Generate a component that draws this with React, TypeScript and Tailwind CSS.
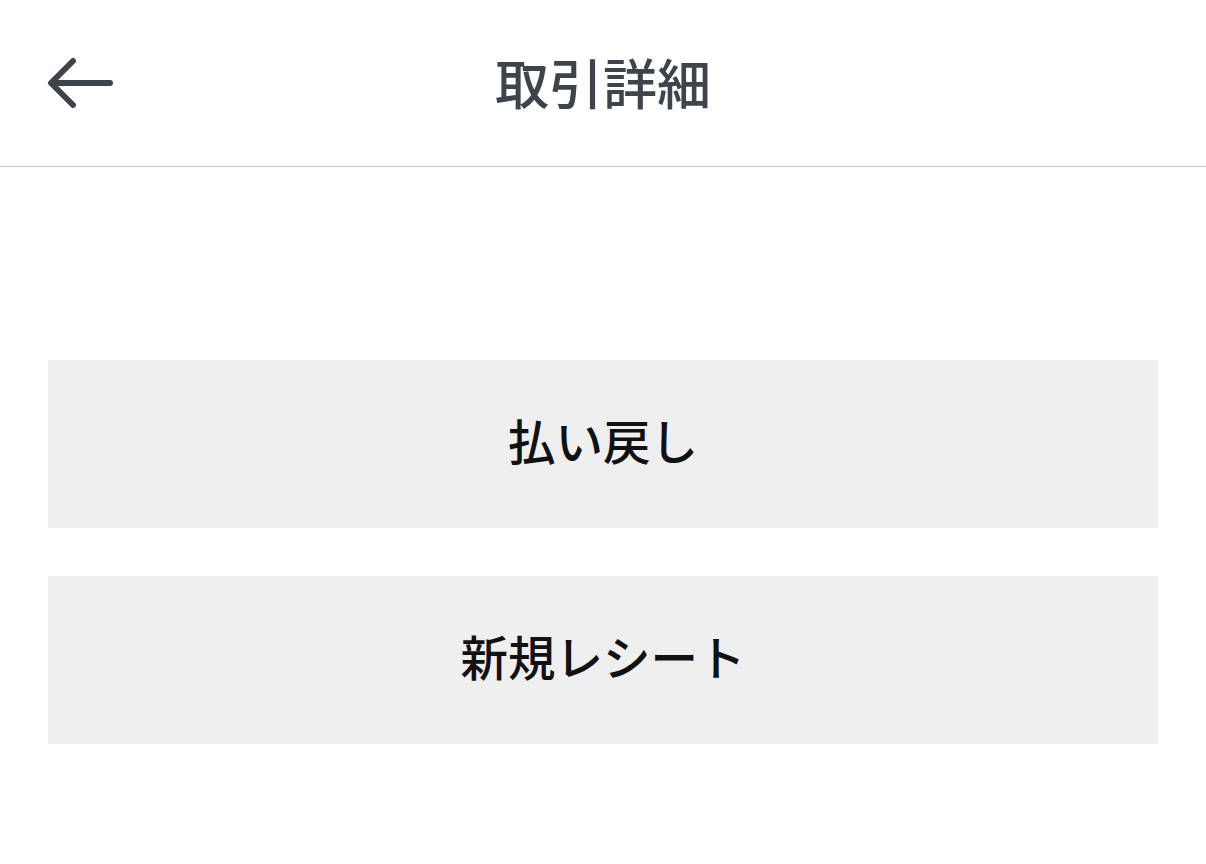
import React from "react";

const font = { fontFamily: '"Noto Sans CJK JP", "Noto Sans", sans-serif' };

const BackArrow = () => (
  <svg width="68" height="52" viewBox="0 0 68 52" fill="none">
    <path
      d="M63 26H5M26 4 4 26l22 22"
      stroke="#3d444b"
      strokeWidth="6"
      strokeLinecap="round"
      strokeLinejoin="round"
    />
  </svg>
);

const actions = ["払い戻し", "新規レシート"];

export default function App() {
  return (
    <div className="h-[864px] w-[1206px] bg-white" style={font}>
      <header className="relative flex h-[167px] items-center justify-center border-b border-[#c8c8c8]">
        <button type="button" className="absolute left-[47px] top-[57px]">
          <BackArrow />
        </button>
        <h1 className="-mt-[2px] text-[54px] font-medium leading-none text-[#3d444b]">取引詳細</h1>
      </header>
      <div className="flex flex-col gap-[48px] px-[48px] pt-[193px]">
        {actions.map((a) => (
          <button
            key={a}
            type="button"
            className="flex h-[168px] items-center justify-center bg-[#efefef] pb-[8px] text-[47.5px] font-medium leading-none text-[#111]"
          >
            {a}
          </button>
        ))}
      </div>
    </div>
  );
}
